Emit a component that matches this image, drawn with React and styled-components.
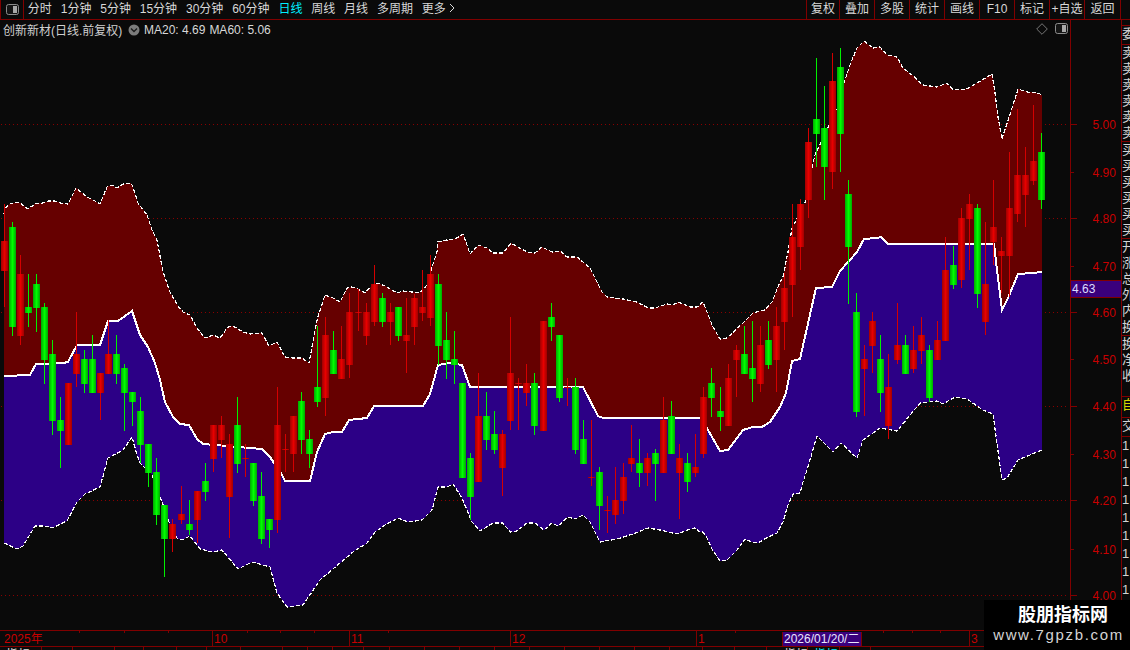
import React from 'react'
import styled, { createGlobalStyle } from 'styled-components'

const FONT = '"Liberation Sans", "Noto Sans CJK SC", sans-serif'
const LINE = '#800000'
const RED = '#c80000'

const GlobalStyle = createGlobalStyle`
  html, body { margin: 0; padding: 0; background: #0a0a0a; overflow: hidden; }
  * { box-sizing: border-box; }
`

const Page = styled.div`
  position: relative;
  width: 1130px;
  height: 650px;
  overflow: hidden;
  background: #0a0a0a;
  font-family: ${FONT};
  font-size: 12px;
  color: #d8d8d8;
  display: flex;
  flex-direction: column;
`
const TopBar = styled.div`
  height: 20px;
  flex: none;
  display: flex;
  justify-content: space-between;
  padding-right: 9px;
  border-bottom: 1px solid ${LINE};
`
const TabGroup = styled.div`
  display: flex;
  align-items: center;
  gap: 8.85px;
`
const IconCell = styled.div`
  width: 24px;
  height: 100%;
  margin-right: -5px;
  display: flex;
  align-items: center;
  justify-content: center;
  border-left: 1px solid ${LINE};
  border-right: 1px solid ${LINE};
`
const Tab = styled.span`
  color: ${p => (p.$active ? '#00eeff' : '#d8d8d8')};
  line-height: 19px;
  white-space: nowrap;
`
const ToolGroup = styled.div`
  display: flex;
`
const ToolBtn = styled.div`
  width: ${p => p.$w || 35}px;
  line-height: 19px;
  text-align: center;
  border-left: 1px solid ${LINE};
  white-space: nowrap;
  &:last-child { border-right: 1px solid ${LINE}; }
`
const Main = styled.div`
  flex: none;
  height: 610px;
  display: flex;
`
const ChartPane = styled.div`
  position: relative;
  width: 1070px;
  height: 100%;
`
const ChartSvg = styled.svg`
  display: block;
`
const Legend = styled.div`
  position: absolute;
  left: 3px;
  top: 0;
  height: 19px;
  display: flex;
  align-items: center;
`
const LegendTitle = styled.span`
  width: 125px;
  color: #d0d0d0;
`
const MaValue = styled.span`
  margin-left: ${p => (p.$first ? 4 : 4)}px;
  color: #d8d8d8;
`
const CornerIcons = styled.div`
  position: absolute;
  right: 2px;
  top: 3px;
  display: flex;
  gap: 7px;
`
const PriceAxis = styled.div`
  position: relative;
  width: 51px;
  height: 100%;
  border-left: 1px solid ${LINE};
`
const AxisText = styled.text`
  font-family: ${FONT};
  font-size: 12px;
  fill: ${RED};
`
const PriceBadge = styled.div`
  position: absolute;
  left: 0;
  right: 0;
  top: 260px;
  height: 18px;
  padding-left: 1px;
  line-height: 16px;
  background: #3a007c;
  border-top: 1px solid ${LINE};
  border-bottom: 1px solid ${LINE};
  color: #dcdcff;
`
const SideStrip = styled.div`
  width: 9px;
  height: 100%;
  overflow: hidden;
  border-left: 1px solid ${LINE};
`
const StripCell = styled.div`
  height: ${p => p.$h}px;
  overflow: hidden;
  border-bottom: ${p => (p.$line ? `1px solid ${LINE}` : 'none')};
  color: ${p => p.$color || '#d4d4d4'};
  font-size: 13px;
  line-height: ${p => p.$lh || 16}px;
  white-space: pre;
`
const DateAxis = styled.div`
  position: relative;
  flex: none;
  height: 17px;
  border-top: 1px solid ${LINE};
  border-bottom: 1px solid ${LINE};
`
const DateBadge = styled.div`
  position: absolute;
  left: 782px;
  top: 1px;
  width: 80px;
  height: 14px;
  padding-left: 1px;
  line-height: 14px;
  background: #3a007c;
  border-left: 1px solid ${LINE};
  border-right: 1px solid ${LINE};
  color: #e8e8ff;
  white-space: nowrap;
`
const BottomTabs = styled.div`
  flex: none;
  height: 3px;
  display: flex;
  overflow: hidden;
`
const BottomTab = styled.div`
  width: ${p => p.$w}px;
  flex: none;
  border-right: 1px solid ${LINE};
  padding-left: ${p => p.$pad || 8}px;
  color: ${p => p.$color || '#e0e0e0'};
  line-height: 16px;
  white-space: nowrap;
  overflow: hidden;
`
const Watermark = styled.div`
  position: absolute;
  right: 0;
  bottom: 0;
  width: 146px;
  height: 50px;
  background: #000;
  display: flex;
  flex-direction: column;
  align-items: center;
`
const MarkTitle = styled.div`
  margin-top: 3px;
  font-size: 18px;
  line-height: 24px;
  font-weight: 700;
  color: #fff;
  padding-left: 12px;
`
const MarkUrl = styled.div`
  margin-top: -1px;
  padding-left: 3px;
  font-size: 15px;
  line-height: 18px;
  letter-spacing: 1.65px;
  color: #d4d4d4;
  white-space: nowrap;
`

const upper = [[4,214],[5,208],[10,204],[17,202],[20,203],[28,209],[35,204],[43,203],[48,201],[55,201],[60,203],[68,204],[76,188],[87,197],[95,201],[100,204],[107,187],[112,185],[117,188],[123,184],[131,183],[133,187],[138,203],[147,215],[152,230],[157,240],[163,272],[170,292],[178,306],[183,312],[190,315],[197,328],[205,338],[213,335],[220,338],[228,327],[233,326],[243,332],[250,334],[262,333],[269,346],[277,342],[285,357],[293,358],[302,358],[309,363],[317,320],[325,295],[333,298],[340,302],[347,288],[352,287],[358,289],[365,293],[372,285],[378,283],[385,286],[390,289],[397,293],[403,291],[412,292],[420,293],[427,285],[432,267],[437,252],[438,242],[447,240],[455,239],[463,234],[467,245],[470,254],[478,245],[487,248],[493,253],[503,253],[511,243],[518,247],[527,252],[535,253],[542,247],[552,252],[560,251],[567,257],[577,257],[590,268],[595,278],[602,292],[607,297],[623,299],[637,302],[648,308],[655,308],[667,304],[673,305],[678,302],[690,307],[697,307],[703,302],[707,312],[713,327],[720,339],[727,338],[743,323],[753,313],[765,310],[772,302],[780,282],[783,277],[788,252],[792,228],[805,203],[812,167],[815,155],[837,108],[844,83],[850,65],[857,48],[864,41],[873,48],[880,47],[887,55],[897,57],[903,68],[912,75],[923,85],[937,87],[947,83],[953,90],[967,89],[977,83],[992,74],[995,93],[998,117],[1002,139],[1012,108],[1018,89],[1027,92],[1038,93],[1042,95]]

const middle = [[4,376],[30,375],[36,364],[63,363],[68,362],[77,345],[100,345],[108,321],[118,321],[132,311],[140,335],[148,347],[155,363],[160,380],[165,402],[173,417],[180,424],[189,425],[197,439],[203,444],[262,449],[270,457],[282,475],[285,481],[310,481],[317,452],[325,434],[333,432],[342,432],[349,420],[367,418],[374,406],[423,406],[430,394],[438,365],[450,363],[462,365],[470,387],[583,387],[598,416],[603,418],[700,418],[708,430],[720,451],[728,450],[743,430],[753,427],[762,427],[770,422],[780,407],[786,393],[792,361],[800,359],[816,288],[832,287],[840,271],[857,252],[864,239],[877,238],[881,237],[888,244],[994,244],[997,270],[1002,310],[1008,298],[1018,274],[1033,273],[1042,272]]

const lower = [[4,543],[17,549],[23,546],[35,526],[45,526],[52,528],[67,521],[77,502],[85,494],[100,487],[108,458],[123,450],[132,437],[137,455],[140,463],[152,475],[165,510],[170,525],[177,538],[182,540],[190,536],[200,549],[213,552],[222,550],[238,569],[252,562],[270,567],[277,593],[287,607],[303,605],[320,580],[340,563],[353,552],[367,543],[375,532],[385,525],[398,518],[408,522],[422,520],[432,510],[438,487],[447,487],[453,484],[462,498],[472,522],[480,531],[493,523],[503,523],[510,532],[517,531],[527,523],[535,523],[544,530],[552,523],[558,526],[568,517],[575,519],[583,515],[590,522],[600,542],[617,539],[633,534],[648,528],[660,530],[677,534],[690,529],[695,528],[700,532],[703,532],[707,538],[712,549],[720,561],[727,560],[737,550],[745,539],[752,542],[758,543],[768,537],[777,533],[783,522],[788,505],[793,494],[800,493],[803,482],[807,470],[817,436],[833,452],[841,443],[857,458],[863,440],[880,428],[897,431],[920,403],[937,401],[943,404],[955,397],[967,399],[983,410],[993,414],[1002,480],[1007,478],[1018,460],[1042,450]]

// up(1 red, 0 green), wick top, body top, body bottom, wick bottom
const candles = [
  [1,204,241,271,307],[0,222,227,327,336],[1,255,274,336,345],[0,274,307,313,327],[0,274,284,308,332],
  [0,303,307,360,384],[0,340,354,421,435],[0,397,420,431,468],[1,383,383,445,445],[1,312,354,374,387],
  [0,350,359,384,393],[0,335,359,393,393],[1,373,373,393,420],[1,320,354,374,374],[0,335,354,374,384],
  [0,364,368,393,431],[0,392,392,402,426],[0,397,411,445,463],[0,444,444,473,487],[0,458,472,515,525],
  [0,505,505,539,577],[1,519,524,539,552],[1,486,514,520,524],[0,500,524,530,535],[1,491,491,520,543],
  [0,463,481,492,501],[1,425,425,459,472],[1,416,425,440,458],[1,434,444,497,538],[0,397,425,464,473],
  [1,444,458,459,477],[0,463,463,501,506],[0,472,496,539,544],[0,519,519,530,548],[1,387,425,520,533],
  [1,434,449,450,472],[1,416,416,454,472],[0,392,401,440,454],[0,430,439,454,468],[0,326,387,402,407],
  [1,317,335,398,416],[0,331,350,374,374],[1,326,359,379,379],[1,293,312,365,378],[1,289,312,313,331],
  [1,303,312,336,345],[1,265,284,322,326],[0,293,298,322,327],[1,303,312,322,345],[0,307,307,336,341],
  [1,298,335,341,373],[1,294,298,327,345],[1,270,307,313,321],[1,255,274,318,326],[0,274,284,346,365],
  [0,312,340,360,379],[0,331,359,365,384],[0,383,383,478,478],[0,453,458,497,520],[1,373,416,482,482],
  [0,392,416,440,450],[0,411,434,450,454],[1,430,434,468,496],[1,317,373,421,430],[1,378,383,384,430],
  [1,364,383,393,406],[0,373,383,426,435],[1,321,321,431,431],[0,303,317,327,341],[0,335,335,398,402],
  [1,378,387,388,406],[0,378,387,450,454],[0,420,439,464,464],[1,420,477,478,486],[0,467,472,506,530],
  [1,496,510,511,533],[1,467,500,515,524],[1,463,477,501,514],[1,425,458,464,472],[0,439,463,473,487],
  [1,453,458,473,486],[0,449,453,464,501],[1,397,420,473,473],[0,401,416,454,454],[1,444,458,473,519],
  [0,453,463,482,492],[1,434,467,473,477],[1,387,397,454,458],[0,368,383,398,417],[0,387,411,417,431],
  [1,364,378,426,426],[1,345,350,360,397],[0,326,354,374,374],[0,321,368,379,402],[1,326,345,384,392],
  [0,321,340,365,369],[1,307,326,360,392],[1,273,288,322,350],[1,204,237,285,317],[1,199,204,247,270],
  [1,128,142,200,218],[0,58,119,134,167],[0,86,128,167,200],[1,53,81,172,189],[0,48,67,134,172],
  [0,180,194,247,304],[0,293,312,412,417],[1,345,359,369,416],[1,312,321,346,373],[0,335,359,393,412],
  [1,354,387,426,439],[1,303,345,360,364],[0,335,345,374,374],[1,326,350,369,373],[1,317,335,351,364],
  [0,345,350,398,402],[1,321,340,360,360],[1,237,270,341,341],[0,246,265,285,289],[1,208,218,280,288],
  [1,194,204,219,270],[0,204,208,294,308],[1,222,284,322,335],[1,180,227,242,265],[1,237,251,256,293],
  [1,152,208,256,297],[1,109,175,214,222],[1,147,175,195,227],[1,105,161,181,185],[0,133,152,200,209],
]

const bodyLeft = i => 1 + 8 * i + Math.floor((i + 1) / 22.4)
const toPoints = pts => pts.map(p => p.join(',')).join(' ')
const gridYs = [124, 218, 312, 406, 500, 595]
const priceTicks = [124, 172, 218, 266, 312, 359, 406, 454, 500, 549, 595]
const priceLabels = ['5.00', '4.90', '4.80', '4.70', '4.60', '4.50', '4.40', '4.30', '4.20', '4.10', '4.00']

const Candle = ({ c, i }) => {
  const [up, wt, bt, bb, wb] = c
  const left = bodyLeft(i)
  return (
    <g>
      <line x1={left + 3.5} x2={left + 3.5} y1={wt} y2={wb} stroke={up ? '#d40000' : '#00f000'} />
      <rect x={left} y={bt} width={7} height={Math.max(1, bb - bt)} fill={up ? 'url(#redBody)' : 'url(#greenBody)'} />
    </g>
  )
}

const Chart = () => (
  <ChartSvg width="1070" height="610" viewBox="0 20 1070 610" shapeRendering="crispEdges">
    <defs>
      <linearGradient id="redBody">
        <stop offset="0" stopColor="#a00000" />
        <stop offset="0.5" stopColor="#e80000" />
        <stop offset="1" stopColor="#a00000" />
      </linearGradient>
      <linearGradient id="greenBody">
        <stop offset="0" stopColor="#00a800" />
        <stop offset="0.5" stopColor="#00ff00" />
        <stop offset="1" stopColor="#00a800" />
      </linearGradient>
    </defs>
    {gridYs.map(y => (
      <line key={y} x1="1" x2="1069" y1={y + 0.5} y2={y + 0.5} stroke="#8a0000" strokeDasharray="1 3" />
    ))}
    <polygon points={toPoints([...upper, ...[...middle].reverse()])} fill="#660000" />
    <polygon points={toPoints([...middle, ...[...lower].reverse()])} fill="#2c0086" />
    <polyline points={toPoints(upper)} fill="none" stroke="#fff" strokeWidth="1.2" strokeDasharray="4 2" />
    <polyline points={toPoints(lower)} fill="none" stroke="#fff" strokeWidth="1.2" strokeDasharray="4 2" />
    <polyline points={toPoints(middle)} fill="none" stroke="#fff" strokeWidth="2" />
    {candles.map((c, i) => <Candle key={i} c={c} i={i} />)}
  </ChartSvg>
)

const PanelIcon = () => (
  <svg width="13" height="11" viewBox="0 0 13 11">
    <rect x="0.5" y="0.5" width="12" height="10" rx="2" fill="#151515" stroke="#8c8c8c" />
    <rect x="7" y="2" width="4" height="7" fill="#a8a8a8" />
  </svg>
)

const Axis = () => (
  <svg width="50" height="610" viewBox="1071 20 50 610" style={{ display: 'block' }}>
    {priceTicks.map((y, i) => (
      <g key={y}>
        <line x1="1071" x2={i % 2 ? 1074 : 1077} y1={y + 0.5} y2={y + 0.5} stroke={LINE} shapeRendering="crispEdges" />
        <AxisText x="1092.5" y={y + 4.5}>{priceLabels[i]}</AxisText>
      </g>
    ))}
  </svg>
)

const stripCells = [
  { h: 6, line: true, text: '' },
  { h: 19, line: true, text: '委' },
  { h: 97, line: true, text: '卖\n卖\n卖\n卖\n卖\n卖' },
  { h: 97, line: true, text: '买\n买\n买\n买\n买\n买' },
  { h: 97, line: true, text: '开\n涨\n总\n外\n内\n换' },
  { h: 61, line: true, text: '换\n净\n收' },
  { h: 21, line: true, text: '自', color: '#d8d800' },
  { h: 19, line: true, text: '交' },
  { h: 190, lh: 18, text: '1\n1\n1\n1\n1\n1\n1\n1\n1\n1' },
]

const dateTicks = [79, 124, 168, 247, 280, 314, 388, 735, 883, 912, 940]
const monthMarks = [
  { x: 212, label: '10' },
  { x: 349, label: '11' },
  { x: 510, label: '12' },
  { x: 696, label: '1' },
  { x: 969, label: '3' },
]

const tabEdges = [42, 73, 115, 144, 177, 207, 241, 283, 308, 333, 364, 390, 425, 460, 495, 530, 565, 600, 635, 670, 703, 735, 767, 808, 840, 871]

const leftTabs = ['分时', '1分钟', '5分钟', '15分钟', '30分钟', '60分钟', '日线', '周线', '月线', '多周期']
const rightTools = [['复权', 33], ['叠加'], ['多股'], ['统计'], ['画线'], ['F10'], ['标记'], ['+自选'], ['返回', 37]]

export default function App() {
  return (
    <Page>
      <GlobalStyle />
      <TopBar>
        <TabGroup>
          <IconCell><PanelIcon /></IconCell>
          {leftTabs.map(t => <Tab key={t} $active={t === '日线'}>{t}</Tab>)}
          <Tab>更多 <svg width="6" height="10" viewBox="0 0 6 10"><path d="M1 1l4 4-4 4" fill="none" stroke="#d8d8d8" /></svg></Tab>
        </TabGroup>
        <ToolGroup>
          {rightTools.map(([t, w]) => <ToolBtn key={t} $w={w}>{t}</ToolBtn>)}
        </ToolGroup>
      </TopBar>

      <Main>
        <ChartPane>
          <Chart />
          <Legend>
            <LegendTitle>创新新材(日线.前复权)</LegendTitle>
            <svg width="12" height="12" viewBox="0 0 12 12">
              <circle cx="6" cy="6" r="5.5" fill="#7c7c7c" />
              <path d="M3 4.5l3 3 3-3" fill="none" stroke="#1c1c1c" strokeWidth="1.4" />
            </svg>
            <MaValue $first>MA20: 4.69</MaValue>
            <MaValue>MA60: 5.06</MaValue>
          </Legend>
          <CornerIcons>
            <svg width="12" height="12" viewBox="0 0 12 12">
              <path d="M6 .7L11.3 6 6 11.3.7 6z" fill="none" stroke="#777" />
            </svg>
            <PanelIcon />
          </CornerIcons>
        </ChartPane>
        <PriceAxis>
          <Axis />
          <PriceBadge>4.63</PriceBadge>
        </PriceAxis>
        <SideStrip>
          {stripCells.map((s, i) => (
            <StripCell key={i} $h={s.h} $lh={s.lh} $line={s.line} $color={s.color}>{s.text}</StripCell>
          ))}
        </SideStrip>
      </Main>

      <DateAxis>
        <svg width="1130" height="15" style={{ display: 'block' }} shapeRendering="crispEdges">
          {dateTicks.map(x => <line key={x} x1={x + 0.5} x2={x + 0.5} y1="0" y2="2" stroke={LINE} />)}
          {monthMarks.map(m => (
            <g key={m.x}>
              <line x1={m.x + 0.5} x2={m.x + 0.5} y1="0" y2="15" stroke={LINE} />
              <AxisText x={m.x + 2} y="12">{m.label}</AxisText>
            </g>
          ))}
          <AxisText x="4" y="12">2025年</AxisText>
        </svg>
        <DateBadge>2026/01/20/二</DateBadge>
      </DateAxis>

      <BottomTabs>
        {tabEdges.map((x, i) => (
          <BottomTab
            key={x}
            $w={x - (i ? tabEdges[i - 1] : 0)}
            $pad={i === 23 ? 17 : 6}
            $color={i === 24 ? '#00eeff' : undefined}
          >
            {i === 0 || i === 23 || i === 24 ? '指标' : ''}
          </BottomTab>
        ))}
      </BottomTabs>

      <Watermark>
        <MarkTitle>股朋指标网</MarkTitle>
        <MarkUrl>www.7gpzb.com</MarkUrl>
      </Watermark>
    </Page>
  )
}
